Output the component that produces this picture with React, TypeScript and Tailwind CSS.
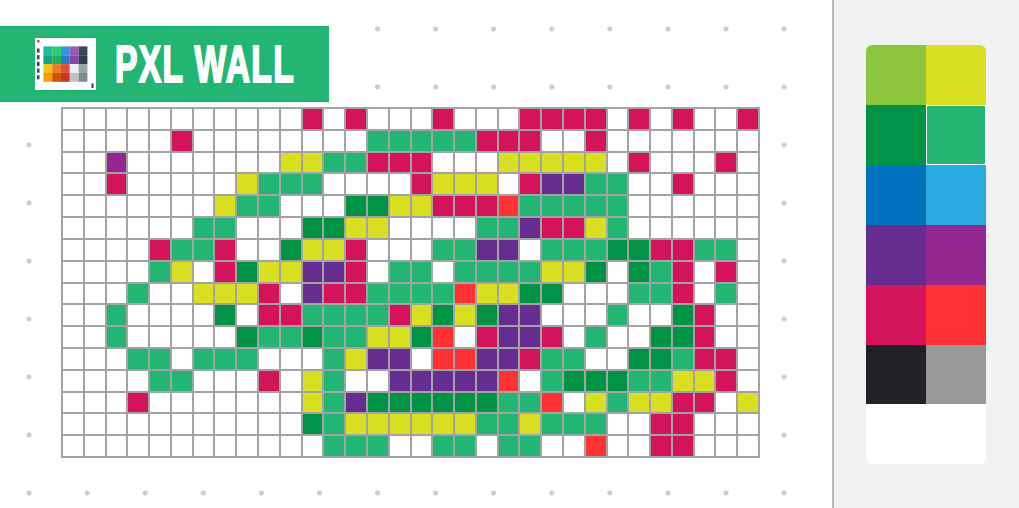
const rows = [
  "...........r.r...r...rrrr.r.r..r",
  ".....r........tttttrrr..r.......",
  "..m.......yyttrrr...yyyyy.r...r.",
  "..r.....yttt....ryyy.rpptt..r...",
  ".......ytt...ggyyrrrottttt......",
  "......tt...ggyy....ttprryt......",
  "....rttr..gyyr...ttpp.tttggrrtt.",
  "....ty.rgyyppr.tt.ttttyyg.gtr.r.",
  "...t..yyyr.prrttttoyygg...ttr.t.",
  "..t....g.rrttttrygygpp...t..gr..",
  "..t.....gttgttyygo.rppr.t..ggr..",
  "...tt.ttt...typp.oopprtt..ggtrr.",
  "....tt...r.yt..pppppo.tgggttyyr.",
  "...r.......ytpggggggtto.ytyyrr.y",
  "...........gtyyyyyyttyttt..rr...",
  "............ttt..tt.tt..o..rr...",
];

const cellClass: Record<string, string> = {
  ".": "bg-white",
  r: "bg-[#d4145a]",
  t: "bg-[#22b573]",
  g: "bg-[#009245]",
  y: "bg-[#d9e021]",
  p: "bg-[#662d91]",
  m: "bg-[#93278f]",
  o: "bg-[#ff3333]",
};

const palette = [
  "bg-[#8cc63f]", "bg-[#d9e021]",
  "bg-[#009245]", "bg-[#22b573] border border-white",
  "bg-[#0071bc]", "bg-[#29abe2]",
  "bg-[#662d91]", "bg-[#93278f]",
  "bg-[#d4145a]", "bg-[#ff3333]",
  "bg-[#222226]", "bg-[#999999]",
  "bg-white", "bg-white",
];

const swatches = [
  ["#1abc9c", "#2ecc71", "#3498db", "#9b59b6", "#34495e"],
  ["#16a085", "#27ae60", "#2980b9", "#8e44ad", "#2c3e50"],
  ["#f1c40f", "#e67e22", "#e74c3c", "#ecf0f1", "#95a5a6"],
  ["#f39c12", "#d35400", "#c0392b", "#bdc3c7", "#7f8c8d"],
];

function Logo() {
  return (
    <svg width="61" height="52" viewBox="0 0 61 52" className="shrink-0">
      <rect width="61" height="52" fill="#ffffff" />
      <rect x="2" y="2" width="2.5" height="2.5" fill="#ff3b30" />
      {[0, 1, 2, 3, 4].map((i) => (
        <rect key={i} x="2" y={10.5 + i * 6.67} width="2.5" height="4.2" fill="#34495e" />
      ))}
      <rect x="56.5" y="45.5" width="2" height="4.5" fill="#34495e" />
      {swatches.map((row, y) =>
        row.map((c, x) => (
          <rect key={`${x}-${y}`} x={8.4 + x * 8.8} y={8.4 + y * 8.85} width="8.8" height="8.85" fill={c} />
        )),
      )}
    </svg>
  );
}

export default function App() {
  return (
    <div className="flex h-[508px] w-[1019px] overflow-hidden bg-white">
      <main className="flex w-[832px] flex-col items-start bg-white bg-[radial-gradient(circle,#cccccc_2px,transparent_3px)] bg-[size:58.08px_58px] pt-[26px]">
        <header className="flex h-[76px] w-[329px] items-center gap-[19px] bg-[#22b573] pl-[35px]">
          <Logo />
          <h1 className="origin-left scale-x-[0.66] whitespace-nowrap font-['Liberation_Sans',sans-serif] text-[51px] font-bold leading-none tracking-[2px] text-white [-webkit-text-stroke:2px_white]">
            PXL WALL
          </h1>
        </header>
        <div className="ml-[61px] mt-[5px] grid h-[351px] w-[699px] grid-cols-[repeat(32,minmax(0,1fr))] grid-rows-[repeat(16,minmax(0,1fr))] gap-[2px] bg-[#a3a3a3] p-[2px]">
          {rows.flatMap((row, y) =>
            row.split("").map((c, x) => <div key={`${x}-${y}`} className={cellClass[c]} />),
          )}
        </div>
      </main>
      <aside className="flex w-[187px] justify-center border-l-2 border-[#b8b8b8] bg-[#f2f2f2] pr-px pt-[45px]">
        <div className="grid h-[419px] w-[120px] grid-cols-2 grid-rows-[repeat(5,60px)_59px_60px] overflow-hidden rounded-[6px]">
          {palette.map((c, i) => (
            <div key={i} className={c} />
          ))}
        </div>
      </aside>
    </div>
  );
}
